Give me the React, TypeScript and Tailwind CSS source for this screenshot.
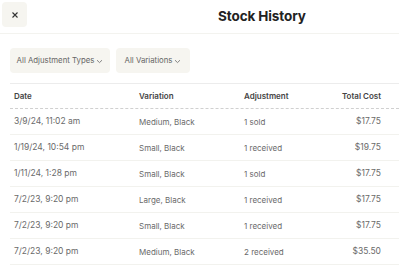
import React from 'react';

const rows = [
  { date: '3/9/24, 11:02 am', variation: 'Medium, Black', adjustment: '1 sold', cost: '$17.75' },
  { date: '1/19/24, 10:54 pm', variation: 'Small, Black', adjustment: '1 received', cost: '$19.75' },
  { date: '1/11/24, 1:28 pm', variation: 'Small, Black', adjustment: '1 sold', cost: '$17.75' },
  { date: '7/2/23, 9:20 pm', variation: 'Large, Black', adjustment: '1 received', cost: '$17.75' },
  { date: '7/2/23, 9:20 pm', variation: 'Small, Black', adjustment: '1 received', cost: '$17.75' },
  { date: '7/2/23, 9:20 pm', variation: 'Medium, Black', adjustment: '2 received', cost: '$35.50' },
];

const Chevron = () => (
  <svg width="7" height="5" viewBox="0 0 7 5" fill="none" className="ml-[2px] mt-[1px]">
    <path d="M1 1.2L3.5 3.6L6 1.2" stroke="#777" strokeWidth="0.9" />
  </svg>
);

const StockHistory = () => {
  return (
    <div className="w-[399px] h-[267px] overflow-hidden bg-white" style={{ fontFamily: 'Inter, "Liberation Sans", sans-serif' }}>
      {/* header */}
      <div className="h-[34px] flex items-start border-b border-[#f3f3ef]">
        <button className="mt-[2px] ml-[2px] w-[25px] h-[25px] rounded-[4px] bg-[#f6f5f0] flex items-center justify-center">
          <svg width="8" height="8" viewBox="0 0 8 8">
            <path d="M1.5 1.5L6.5 6.5M6.5 1.5L1.5 6.5" stroke="#333" strokeWidth="1.1" />
          </svg>
        </button>
        <h1 className="ml-[191px] mt-[6px] text-[13.5px] font-bold text-[#222] tracking-[-0.1px]">Stock History</h1>
      </div>

      {/* filters */}
      <div className="px-[10px] pt-[14px] pb-[10px] flex gap-[6px]">
        <button className="h-[25px] w-[100px] rounded-[4px] bg-[#f6f5f0] flex items-center justify-center text-[7.8px] text-[#666]">
          All Adjustment Types
          <Chevron />
        </button>
        <button className="h-[25px] w-[74px] rounded-[4px] bg-[#f6f5f0] flex items-center justify-center text-[7.8px] text-[#666]">
          All Variations
          <Chevron />
        </button>
      </div>

      {/* table */}
      <div className="ml-[10px] border-t border-[#ececec]">
        <div className="h-[25px] grid grid-cols-[125px_105px_1fr_auto] items-center pl-[4px] pr-[18px] border-b border-dashed border-[#d0d0d0] text-[8px] font-semibold text-[#444]">
          <span>Date</span>
          <span>Variation</span>
          <span>Adjustment</span>
          <span className="text-right">Total Cost</span>
        </div>
        {rows.map((r, i) => (
          <div
            key={i}
            className="h-[26px] grid grid-cols-[125px_105px_1fr_auto] items-center pl-[4px] pr-[18px] border-b border-[#f2f2ee] text-[8.5px] text-[#6a6a6a]"
          >
            <span>{r.date}</span>
            <span className="text-[8px]">{r.variation}</span>
            <span className="text-[8px]">{r.adjustment}</span>
            <span className="text-right">{r.cost}</span>
          </div>
        ))}
      </div>
    </div>
  );
};

export default function App() {
  return <StockHistory />;
}
